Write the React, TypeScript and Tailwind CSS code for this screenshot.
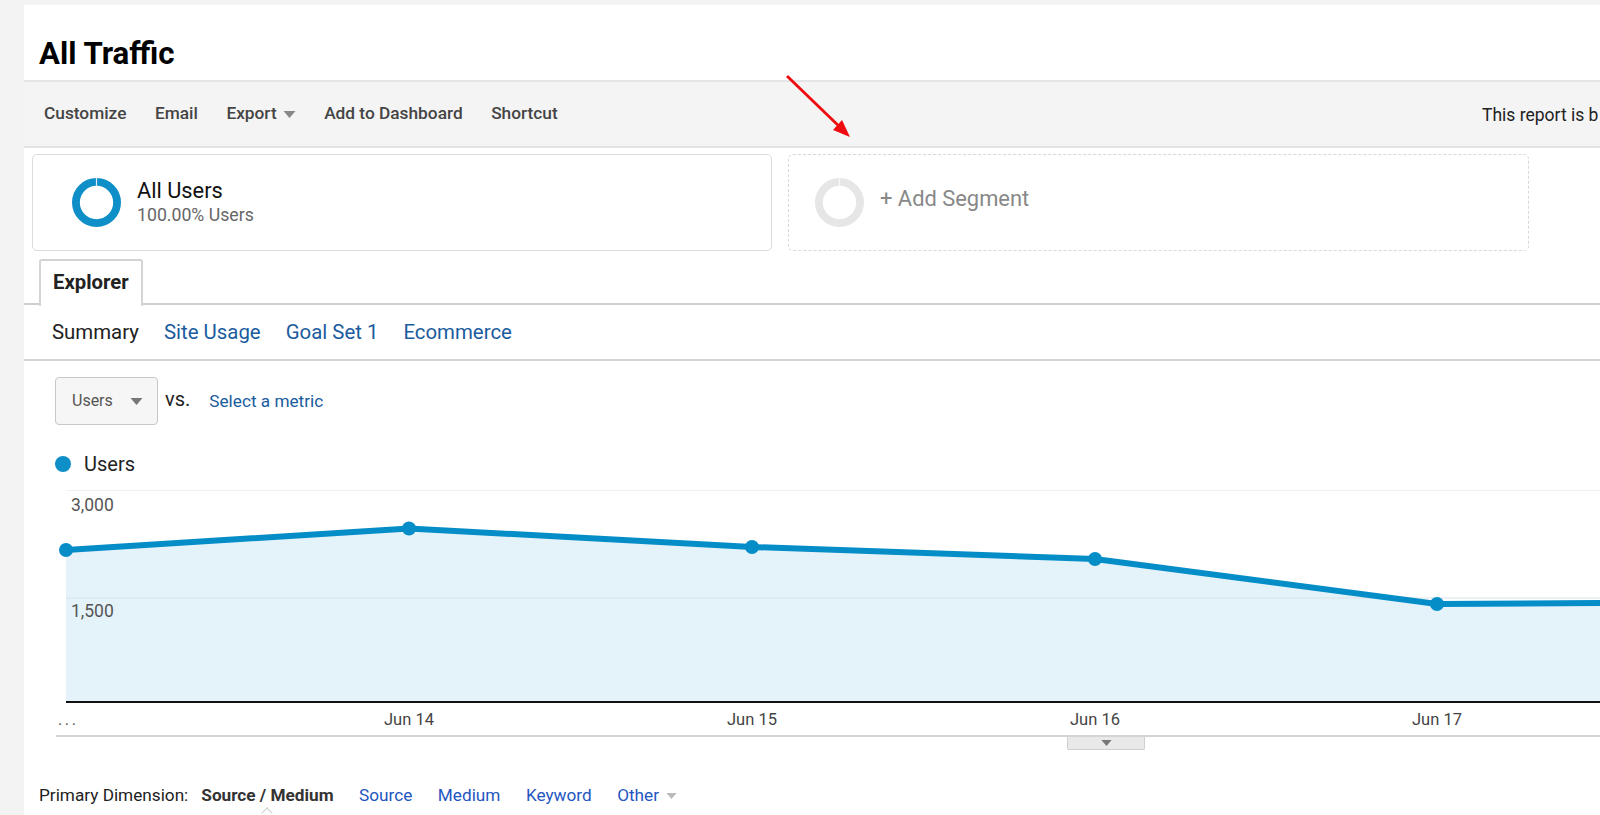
import React from 'react';

const points = [
  [66, 60],
  [409, 38.5],
  [752, 57],
  [1095, 69],
  [1437, 114],
  [1600, 113],
];

function Caret({ className }: { className: string }) {
  return (
    <svg viewBox="0 0 12 7" className={className}>
      <path d="M0 0h12L6 7z" fill="currentColor" />
    </svg>
  );
}

function Donut({ color, gap }: { color: string; gap: string }) {
  return (
    <svg viewBox="0 0 50 50" className="w-[49px] h-[49px] shrink-0">
      <circle cx="25" cy="25" r="21" fill="none" stroke={color} strokeWidth="8" />
      <rect x="24.4" y="0" width="1.2" height="8" fill={gap} />
    </svg>
  );
}

function Chart() {
  const line = points.map((p) => p.join(',')).join(' ');
  const labels = [
    ['Jun 14', 409],
    ['Jun 15', 752],
    ['Jun 16', 1095],
    ['Jun 17', 1437],
  ] as const;

  return (
    <svg viewBox="0 0 1600 245" className="block w-[1600px] h-[245px]">
      <line x1="66" y1="0" x2="1600" y2="0" stroke="#e4e4e4" />
      <polygon points={`66,212 ${line} 1600,212`} fill="#e4f3fa" />
      <line x1="66" y1="108" x2="1600" y2="108" stroke="#d8e2e6" />
      <text x="71" y="21" fontSize="17.5" fill="#555">3,000</text>
      <text x="71" y="127" fontSize="17.5" fill="#555">1,500</text>
      <polyline points={line} fill="none" stroke="#058dc7" strokeWidth="6" />
      {points.slice(0, 5).map((p) => (
        <circle key={p[0]} cx={p[0]} cy={p[1]} r="7" fill="#058dc7" />
      ))}
      <line x1="66" y1="212" x2="1600" y2="212" stroke="#111" strokeWidth="2" />
      <text x="58" y="235" fontSize="16.5" letterSpacing="2.5" fill="#555">...</text>
      {labels.map(([t, x]) => (
        <text key={t} x={x} y="235" fontSize="16.5" fill="#444" textAnchor="middle">{t}</text>
      ))}
    </svg>
  );
}

function App() {
  return (
    <div className="h-[815px] overflow-hidden bg-[#f3f3f3] pl-6 pt-[5px] font-['Roboto',sans-serif]">
      <div className="relative h-[810px] bg-white overflow-hidden">
        <div className="h-[77px] pl-[15px] pt-[29px] border-b-2 border-[#e5e5e5]">
          <h1 className="text-[31.2px] leading-[40px] font-bold text-black">All Traffic</h1>
        </div>

        <div className="h-[66px] bg-[#f4f4f4] border-b-2 border-[#e3e3e3] flex items-center pl-5 text-[17.3px] font-medium text-[#444] whitespace-nowrap">
          <span>Customize</span>
          <span className="ml-[28.5px]">Email</span>
          <span className="ml-[28.5px]">Export</span>
          <Caret className="w-[13px] h-[7px] ml-[6px] text-[#888]" />
          <span className="ml-[28.5px]">Add to Dashboard</span>
          <span className="ml-[28.5px]">Shortcut</span>
          <span className="absolute left-[1458px] top-[97px] font-normal text-[17.5px] text-[#222]">
            This report is b
          </span>
        </div>

        <svg width="70" height="70" viewBox="0 0 70 70" className="absolute left-[760px] top-[68px]">
          <line x1="3" y1="3" x2="60" y2="58" stroke="#ee0a0f" strokeWidth="2.8" />
          <path d="M66 64 L49 57 L58 47 z" fill="#ee0a0f" />
        </svg>

        <div className="flex gap-4 pl-2 pt-[6px]">
          <div className="w-[740px] h-[97px] border border-[#dcdcdc] rounded-[5px] flex items-center pl-[39px] gap-[16px]">
            <Donut color="#0f8fc8" gap="#dfeef6" />
            <div>
              <div className="text-[21.8px] leading-[26px] text-[#111]">All Users</div>
              <div className="text-[17.7px] leading-[23px] text-[#666]">100.00% Users</div>
            </div>
          </div>
          <div className="w-[741px] h-[97px] border border-dashed border-[#d8d8d8] rounded-[5px] flex items-center pl-[26px] gap-[16px]">
            <Donut color="#e6e6e6" gap="#f8f8f8" />
            <div className="text-[21.9px] text-[#888] -mt-[6px]">+ Add Segment</div>
          </div>
        </div>

        <div className="h-[54px] pl-[15px] pt-[8px] border-b-2 border-[#cfcfcf] flex">
          <div className="relative w-[104px] h-[47px] bg-white border-2 border-b-0 border-[#d4d4d4] rounded-t-[3px] pl-[12px] pt-[7px] text-[20.3px] leading-[28px] font-bold text-[#222]">
            Explorer
          </div>
        </div>

        <div className="h-[56px] border-b-2 border-[#d4d4d4] flex items-center pl-7 text-[20.4px] text-[#1a5c9e] gap-[25px] whitespace-nowrap">
          <span className="text-[#222]">Summary</span>
          <span>Site Usage</span>
          <span>Goal Set 1</span>
          <span>Ecommerce</span>
        </div>

        <div className="flex pl-[31px] pt-[16px]">
          <div className="w-[103px] h-[48px] border border-[#c8c8c8] rounded-[4px] bg-[#f6f6f6] flex items-center pl-4 text-[16px] text-[#555]">
            <span>Users</span>
            <Caret className="w-[13px] h-[7px] ml-[17px] text-[#777]" />
          </div>
          <span className="ml-[7px] mt-[10px] text-[20px] leading-[24px] text-[#222]">vs.</span>
          <span className="ml-[19px] mt-[12px] text-[17.2px] leading-[24px] text-[#1a5c9e]">Select a metric</span>
        </div>

        <div className="flex items-center pl-[31px] mt-[26px] h-[26px] text-[20px] text-[#222]">
          <span className="w-4 h-4 rounded-full bg-[#0f8fc8]" />
          <span className="ml-[13px]">Users</span>
        </div>

        <div className="-ml-6 mt-[13px]">
          <Chart />
        </div>

        <div className="relative ml-8 border-t-2 border-[#d4d4d4]">
          <div className="absolute left-[1011px] top-0 w-[78px] h-[13px] bg-[#e9e9e9] border border-t-0 border-[#d0d0d0] rounded-b-[2px] flex justify-center pt-[3px]">
            <Caret className="w-[13px] h-[6px] text-[#777]" />
          </div>
        </div>

        <div className="flex items-center pl-[15px] mt-[46px] text-[17.2px] text-[#222] whitespace-nowrap">
          <span>Primary Dimension:</span>
          <span className="ml-[13px] font-bold text-[#333]">Source / Medium</span>
          <span className="ml-[25.5px] text-[#2456c0]">Source</span>
          <span className="ml-[25.5px] text-[#2456c0]">Medium</span>
          <span className="ml-[25.5px] text-[#2456c0]">Keyword</span>
          <span className="ml-[25.5px] text-[#2456c0]">Other</span>
          <Caret className="w-[13px] h-[6px] ml-[6px] text-[#bbb]" />
        </div>
        <div className="absolute left-[239px] top-[804px] w-2 h-2 rotate-45 bg-white border-l border-t border-[#ccc]" />
      </div>
    </div>
  );
}

export default App;
